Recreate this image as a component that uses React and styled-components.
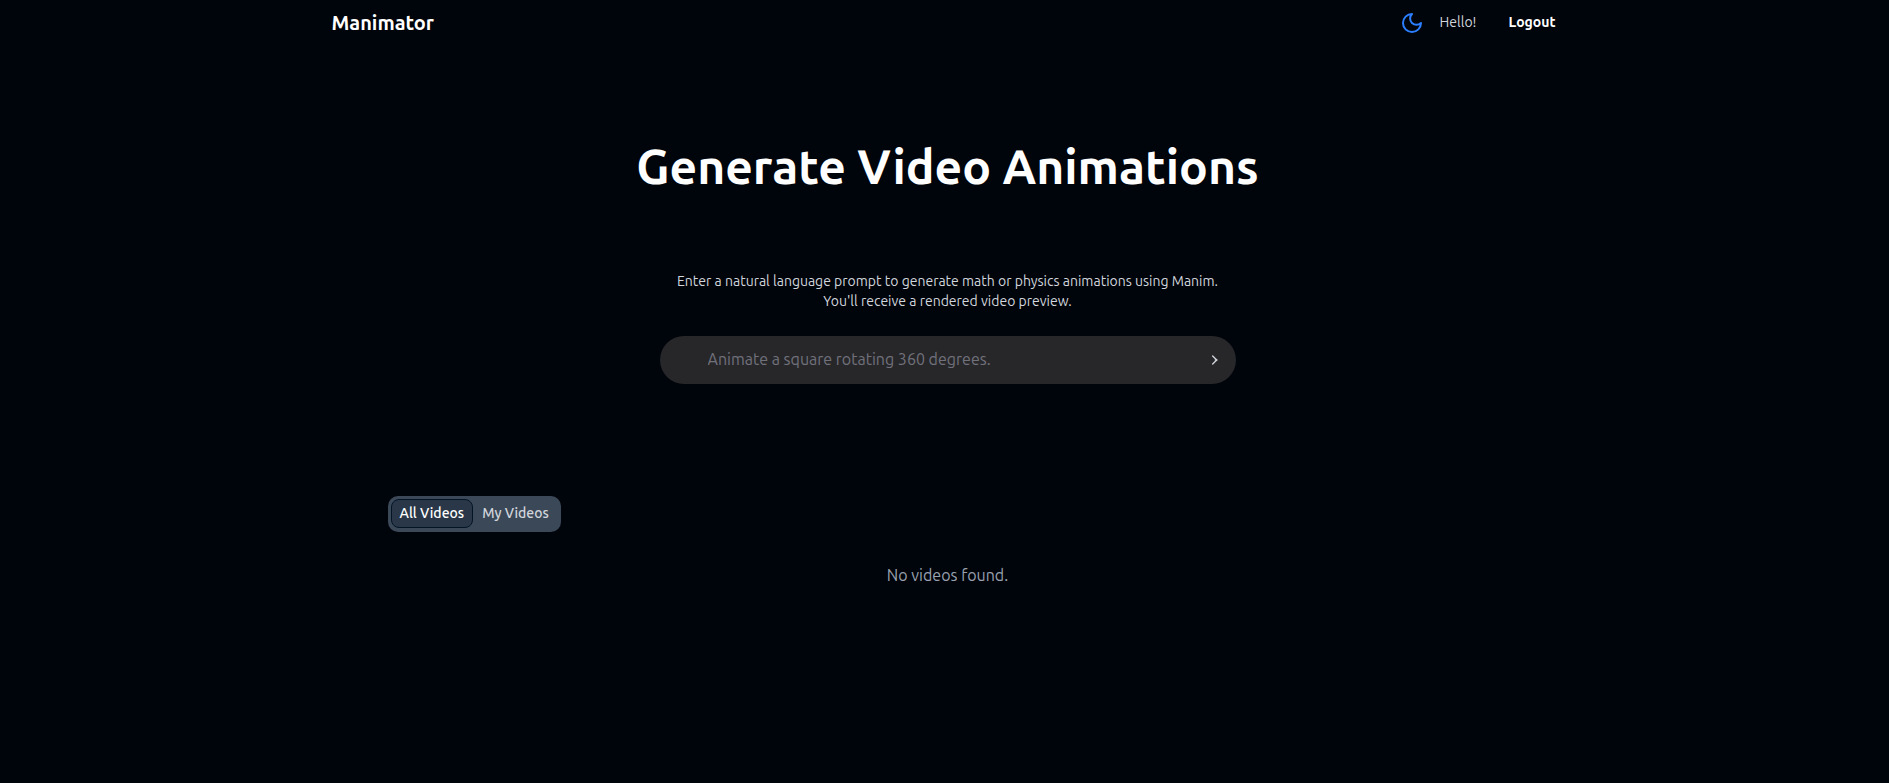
import React, { useState } from "react";
import styled, { createGlobalStyle } from "styled-components";

const GlobalStyle = createGlobalStyle`
  *, *::before, *::after { box-sizing: border-box; }
  body {
    margin: 0;
    background: #00040b;
    color: #fff;
    font-family: "Ubuntu", "Noto Sans", "Open Sans", sans-serif;
    font-size: 16px;
    line-height: 24px;
  }
  button, input { font: inherit; color: inherit; }
  h1, p { margin: 0; }
`;

const Page = styled.div`
  min-height: 100vh;
  padding-left: 6px;
`;

const Header = styled.header`
  display: flex;
  align-items: center;
  justify-content: space-between;
  max-width: 1280px;
  height: 46px;
  margin: 0 auto;
  padding: 0 24px;
`;

const Brand = styled.a`
  font-size: 20px;
  font-weight: 600;
  line-height: 28px;
  color: #fff;
  text-decoration: none;
`;

const Account = styled.div`
  display: flex;
  align-items: center;
  font-size: 14px;
  line-height: 20px;
`;

const Icon = styled.svg`
  display: block;
  width: ${(p) => p.$size}px;
  height: ${(p) => p.$size}px;
  fill: none;
  stroke: currentColor;
  stroke-width: 2;
  stroke-linecap: round;
  stroke-linejoin: round;
`;

const PlainButton = styled.button`
  display: inline-flex;
  align-items: center;
  justify-content: center;
  padding: 0;
  border: 0;
  background: none;
  cursor: pointer;
`;

const ThemeButton = styled(PlainButton)`
  margin-right: 16px;
  color: #2b7fff;
`;

const Greeting = styled.span`
  margin-right: 24px;
  padding-bottom: 2px;
  color: #d1d5dc;
`;

const LogoutButton = styled(PlainButton)`
  padding: 0 8px 2px;
  font-weight: 700;
`;

const Hero = styled.section`
  display: flex;
  flex-direction: column;
  align-items: center;
  padding: 96px 16px 0;
  text-align: center;
`;

const Title = styled.h1`
  margin-bottom: 81px;
  font-size: 48px;
  font-weight: 600;
  line-height: 48px;
`;

const Lead = styled.p`
  max-width: 576px;
  margin-bottom: 25px;
  color: #d1d5dc;
  font-size: 14px;
  line-height: 20px;
`;

const PromptForm = styled.form`
  display: flex;
  align-items: center;
  width: 100%;
  max-width: 576px;
  height: 48px;
  padding: 0 8px 0 48px;
  border-radius: 24px;
  background: #27272a;
`;

const PromptInput = styled.input`
  flex: 1;
  min-width: 0;
  padding: 0 0 2px;
  border: 0;
  outline: 0;
  background: none;
  &::placeholder { color: #71717b; opacity: 1; }
`;

const SubmitButton = styled(PlainButton)`
  width: 32px;
  height: 32px;
  border-radius: 50%;
  color: #d1d5dc;
`;

const Library = styled.section`
  max-width: 1152px;
  margin: 0 auto;
  padding: 112px 16px 48px;
`;

const TabList = styled.div`
  display: flex;
  width: fit-content;
  height: 36px;
  padding: 3px 3px 4px;
  border-radius: 10px;
  background: #3b4858;
`;

const Tab = styled.button`
  padding: 0 8px 1px;
  border: 1px solid ${(p) => (p.$active ? "#031427" : "transparent")};
  border-radius: 8px;
  background: ${(p) => (p.$active ? "#293748" : "transparent")};
  color: ${(p) => (p.$active ? "#fff" : "#d1d5dc")};
  font-size: 14px;
  font-weight: 500;
  line-height: 20px;
  cursor: pointer;
`;

const Empty = styled.p`
  margin-top: 31px;
  color: #99a1af;
  text-align: center;
`;

const tabs = ["All Videos", "My Videos"];

export default function App() {
  const [active, setActive] = useState(tabs[0]);
  return (
    <Page>
      <GlobalStyle />
      <Header>
        <Brand href="#">Manimator</Brand>
        <Account>
          <ThemeButton type="button" aria-label="Toggle theme">
            <Icon $size={24} viewBox="0 0 24 24" aria-hidden="true">
              <path d="M12 3a6 6 0 0 0 9 9 9 9 0 1 1-9-9Z" />
            </Icon>
          </ThemeButton>
          <Greeting>Hello!</Greeting>
          <LogoutButton type="button">Logout</LogoutButton>
        </Account>
      </Header>
      <main>
        <Hero>
          <Title>Generate Video Animations</Title>
          <Lead>
            Enter a natural language prompt to generate math or physics animations using Manim.
            <br />
            You'll receive a rendered video preview.
          </Lead>
          <PromptForm onSubmit={(e) => e.preventDefault()}>
            <PromptInput aria-label="Prompt" placeholder="Animate a square rotating 360 degrees." />
            <SubmitButton type="submit" aria-label="Generate">
              <Icon $size={16} viewBox="0 0 24 24" aria-hidden="true">
                <path d="M17 12h2" />
                <path d="M13 18l6-6" />
                <path d="M13 6l6 6" />
              </Icon>
            </SubmitButton>
          </PromptForm>
        </Hero>
        <Library>
          <TabList role="tablist">
            {tabs.map((name) => (
              <Tab
                key={name}
                type="button"
                role="tab"
                aria-selected={active === name}
                $active={active === name}
                onClick={() => setActive(name)}
              >
                {name}
              </Tab>
            ))}
          </TabList>
          <Empty>No videos found.</Empty>
        </Library>
      </main>
    </Page>
  );
}
